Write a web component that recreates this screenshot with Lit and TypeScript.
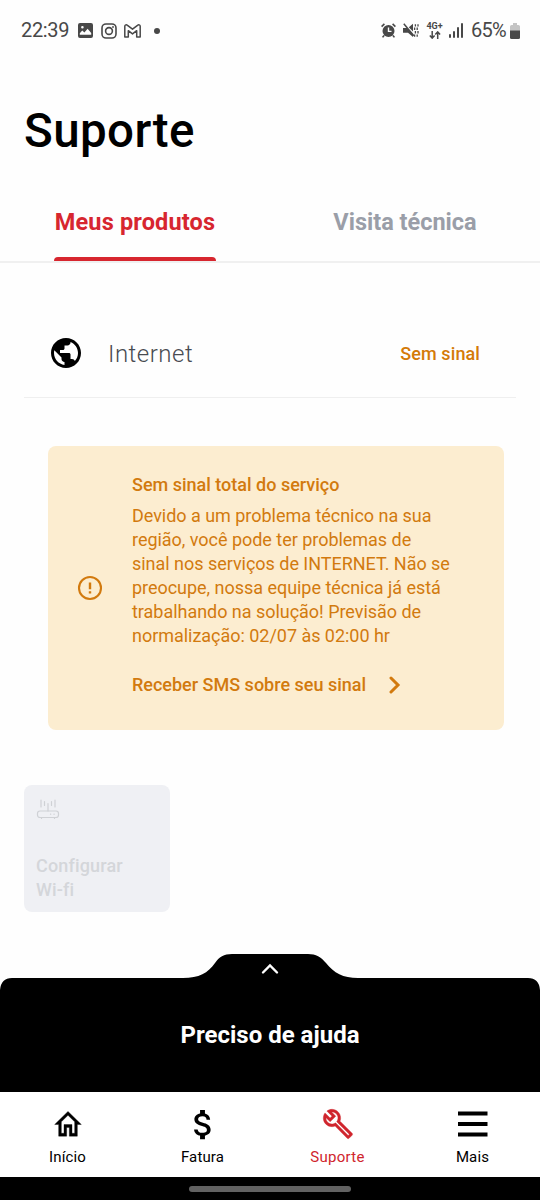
import { LitElement, html, css } from "lit";
import { customElement, property } from "lit/decorators.js";

@customElement("status-bar")
class StatusBar extends LitElement {
  static styles = css`
    :host {
      display: flex;
      justify-content: space-between;
      height: 61px;
      padding: 0 20px 0 21px;
      color: #484848;
      font: 400 20px/61px Roboto, "Liberation Sans", sans-serif;
      white-space: nowrap;
    }
    .group {
      display: flex;
      align-items: center;
    }
    svg {
      display: block;
      flex: none;
    }
    .time {
      width: 57px;
      letter-spacing: -0.35px;
    }
    .picture {
      margin-right: 8px;
    }
    .insta {
      margin-right: 7px;
    }
    .dot {
      width: 6px;
      height: 6px;
      margin-left: 13px;
      border-radius: 50%;
      background: #484848;
    }
    .alarm {
      margin-right: 7px;
    }
    .mute {
      margin-right: 7px;
    }
    .net {
      display: flex;
      flex-direction: column;
      align-items: center;
      width: 17px;
      margin-right: 6px;
      font-size: 9px;
      font-weight: 700;
      line-height: 9px;
    }
    .bars {
      margin-right: 7px;
    }
    .percent {
      width: 39px;
      letter-spacing: -0.7px;
    }
  `;

  render() {
    return html`
      <div class="group">
        <span class="time">22:39</span>
        <svg class="picture" width="15" height="15" viewBox="0 0 15 15">
          <path
            fill="#484848"
            fill-rule="evenodd"
            d="M2 0h11a2 2 0 0 1 2 2v11a2 2 0 0 1-2 2H2a2 2 0 0 1-2-2V2a2 2 0 0 1 2-2zM1.8 11.8h11.4V10L9.6 5.8 6.4 9.6 4.3 7.6 1.8 10.2zM4.4 3a1.3 1.3 0 1 0 0 2.6 1.3 1.3 0 0 0 0-2.6z"
          />
        </svg>
        <svg class="insta" width="16" height="16" viewBox="0 0 16 16" fill="none" stroke="#484848">
          <rect x="1" y="1" width="14" height="14" rx="4" stroke-width="1.6" />
          <circle cx="8" cy="8" r="3.4" stroke-width="1.6" />
          <circle cx="12" cy="4" r="0.9" fill="#484848" stroke="none" />
        </svg>
        <svg width="17" height="14" viewBox="0 0 17 14" fill="none" stroke="#484848" stroke-width="1.5" stroke-linejoin="round">
          <path d="M.8 2.2v10.9h3.5V6.7l4.2 3.2 4.2-3.2v6.4h3.5V2.2C16.2.8 14.6.4 13.5 1.3l-5 3.9-5-3.9C2.4.4.8.8.8 2.2z" />
        </svg>
        <span class="dot"></span>
      </div>
      <div class="group">
        <svg class="alarm" width="15" height="15" viewBox="0 0 15 15">
          <circle cx="7.5" cy="8" r="6" fill="#484848" />
          <path d="M7.5 4.6v3.8h3" fill="none" stroke="#fff" stroke-width="1.4" />
          <path d="M.6 3.6 3.4.9M14.4 3.6 11.6.9M3 12.5l-1.4 1.9M12 12.5l1.4 1.9" stroke="#484848" stroke-width="1.6" />
        </svg>
        <svg class="mute" width="16" height="15" viewBox="0 0 16 15">
          <path d="M0 5h3.8l6.2 6.2V14L5 9.8H0zM5.8 4.2 10 .8v7.6z" fill="#484848" />
          <path d="M.8.8 10.8 12.8" stroke="#484848" stroke-width="1.5" />
          <path d="M12.4 1.2v2.4M11.6 4.6v2.4M12.4 8v2.4M11.6 11.4v2.4M15 1.2v2.4M14.2 4.6v2.4M15 8v2.4M14.2 11.4v2.4" stroke="#484848" stroke-width="1.3" />
        </svg>
        <div class="net">
          <span>4G+</span>
          <svg width="12" height="8" viewBox="0 0 12 8" fill="none" stroke="#484848" stroke-width="1.5">
            <path d="M3.2 0v7M.8 4.5l2.4 2.6 2.4-2.6M8.7 8V1M6.3 3.5 8.7.9l2.4 2.6" />
          </svg>
        </div>
        <svg class="bars" width="15" height="15" viewBox="0 0 15 15" fill="#484848">
          <rect x="0" y="11" width="2" height="4" rx="1" />
          <rect x="4" y="8" width="2" height="7" rx="1" />
          <rect x="8" y="4" width="2" height="11" rx="1" />
          <rect x="12" y="0" width="2" height="15" rx="1" />
        </svg>
        <span class="percent">65%</span>
        <svg width="10" height="16" viewBox="0 0 10 16">
          <path d="M3 0h4v2h1.4A1.6 1.6 0 0 1 10 3.6V8H0V3.6A1.6 1.6 0 0 1 1.6 2H3z" fill="#c4c4c4" />
          <path d="M0 7.5h10v7a1.5 1.5 0 0 1-1.5 1.5h-7A1.5 1.5 0 0 1 0 14.5z" fill="#484848" />
        </svg>
      </div>
    `;
  }
}

const navIcons: Record<string, unknown> = {
  home: html`<svg width="32" height="35" viewBox="0 0 24 24" preserveAspectRatio="none">
    <path d="M12 5.69l5 4.5V18h-2v-6H9v6H7v-7.81l5-4.5M12 3L2 12h3v8h6v-6h2v6h6v-8h3L12 3z" stroke="currentColor" stroke-width="0.25" />
  </svg>`,
  money: html`<svg width="39" height="39" viewBox="0 0 24 24">
    <path d="M11.8 10.9c-2.27-.59-3-1.2-3-2.15 0-1.09 1.01-1.85 2.7-1.85 1.78 0 2.44.85 2.5 2.1h2.21c-.07-1.72-1.12-3.3-3.21-3.81V3h-3v2.16c-1.94.42-3.5 1.68-3.5 3.61 0 2.31 1.91 3.46 4.7 4.13 2.5.6 3 1.48 3 2.41 0 .69-.49 1.79-2.7 1.79-2.06 0-2.87-.92-2.98-2.1h-2.2c.12 2.19 1.76 3.42 3.68 3.83V21h3v-2.15c1.95-.37 3.5-1.5 3.5-3.55 0-2.84-2.43-3.81-4.7-4.4z" transform="translate(.5)" />
  </svg>`,
  wrench: html`<svg width="32" height="32" viewBox="0 0 24 24">
    <path d="M22.61 18.99l-9.08-9.08c.93-2.34.45-5.1-1.44-7C9.79.61 6.21.4 3.66 2.26L7.5 6.11 6.08 7.52 2.25 3.69C.39 6.23.6 9.82 2.9 12.11c1.86 1.86 4.57 2.35 6.89 1.48l9.11 9.11c.39.39 1.02.39 1.41 0l2.3-2.3c.4-.38.4-1.01 0-1.41zm-3 1.6l-9.46-9.46c-.61.45-1.29.72-2 .82-1.36.2-2.79-.21-3.83-1.25C3.37 9.76 2.93 8.5 3 7.26l3.09 3.09 4.24-4.24-3.09-3.09c1.24-.07 2.49.37 3.44 1.31 1.08 1.08 1.49 2.57 1.24 3.96-.12.71-.42 1.37-.88 1.96l9.45 9.45-.88.89z" stroke="currentColor" stroke-width="0.3" />
  </svg>`,
  menu: html`<svg width="30" height="26" viewBox="0 0 30 26">
    <path d="M0 .5h29.5v4H0zM0 11h29.5v4H0zM0 21.500h29.5v4H0z" />
  </svg>`,
};

@customElement("nav-item")
class NavItem extends LitElement {
  @property() icon = "";
  @property() label = "";

  static styles = css`
    :host {
      display: flex;
      flex-direction: column;
      align-items: center;
      fill: currentColor;
      color: #000;
    }
    :host([active]) {
      color: #d0252d;
    }
    .icon {
      display: grid;
      place-items: center;
      height: 40px;
      margin-top: 12px;
    }
    svg {
      display: block;
    }
    .label {
      margin-top: 3px;
      font: 400 15px/20px Roboto, "Liberation Sans", sans-serif;
      letter-spacing: 0.15px;
      white-space: nowrap;
    }
    :host([active]) .label {
      letter-spacing: 0.3px;
    }
  `;

  render() {
    return html`<span class="icon">${navIcons[this.icon]}</span><span class="label">${this.label}</span>`;
  }
}

@customElement("app-root")
class AppRoot extends LitElement {
  static styles = css`
    :host {
      display: flex;
      flex-direction: column;
      width: 540px;
      height: 1200px;
      overflow: hidden;
      background: #fefefe;
      font-family: Roboto, "Liberation Sans", sans-serif;
      font-variant-ligatures: none;
      white-space: nowrap;
    }
    svg {
      display: block;
      flex: none;
    }
    h1 {
      margin: 40px 0 0 24px;
      font-size: 47.5px;
      line-height: 60px;
      font-weight: 500;
      letter-spacing: 0.4px;
      color: #000;
    }
    .tabs {
      display: grid;
      grid-template-columns: 1fr 1fr;
      justify-items: center;
      height: 100px;
      border-bottom: 2px solid #f0f0f0;
    }
    .tab {
      box-sizing: border-box;
      height: 100px;
      padding-top: 46px;
      font-size: 23.5px;
      line-height: 30px;
      font-weight: 700;
      color: #9a9ea8;
    }
    .tab.on {
      display: flex;
      flex-direction: column;
      justify-content: space-between;
      letter-spacing: 0.15px;
      color: #d7262f;
    }
    .tab.on::after {
      content: "";
      height: 4.5px;
      border-radius: 4px 4px 0 0;
      background: #d7262f;
    }
    .on span {
      padding: 0 1px;
    }
    .product {
      display: flex;
      align-items: center;
      height: 88px;
      margin: 46px 24px 0;
      padding: 0 36px 0 24px;
      border-bottom: 1px solid #efefef;
    }
    .product-name {
      flex: 1;
      margin-left: 24px;
      padding-top: 1px;
      font-size: 24px;
      font-weight: 300;
      letter-spacing: 0.5px;
      color: #484b51;
    }
    .product-state {
      font-size: 18px;
      font-weight: 500;
      letter-spacing: 0.1px;
      color: #d47a08;
    }
    .alert {
      display: flex;
      align-items: center;
      box-sizing: border-box;
      height: 284px;
      margin: 48px 36px 0 48px;
      border-radius: 8px;
      padding-left: 29px;
      background: #fcedd0;
      color: #d27a0e;
      font-size: 18px;
      line-height: 24px;
    }
    .alert-text {
      margin-left: 29px;
      padding-bottom: 7px;
    }
    .alert strong {
      display: block;
      margin-bottom: 7px;
      font-weight: 500;
    }
    .line {
      display: block;
      letter-spacing: -0.03px;
    }
    .sms {
      display: flex;
      align-items: center;
      gap: 23px;
      margin-top: 25px;
      font-weight: 500;
    }
    .tile {
      display: flex;
      flex-direction: column;
      justify-content: space-between;
      box-sizing: border-box;
      width: 146px;
      height: 127px;
      margin: 55px 0 0 24px;
      padding: 13px 12px 10px;
      border-radius: 8px;
      background: #eff0f4;
      color: #d4d6da;
      font-size: 18px;
      line-height: 24px;
      font-weight: 500;
      letter-spacing: 0.15px;
    }
    .help {
      display: grid;
      grid-template: 138px / 540px;
      margin-top: auto;
    }
    .help-shape,
    .help-content {
      grid-area: 1 / 1;
    }
    .help-content {
      display: flex;
      flex-direction: column;
      align-items: center;
      padding-top: 9px;
      color: #fff;
      font-size: 24px;
      line-height: 30px;
      font-weight: 700;
    }
    .help-label {
      margin-top: 45px;
    }
    .nav {
      display: grid;
      grid-template-columns: repeat(4, 1fr);
      height: 85px;
      background: #fff;
    }
    .gesture {
      display: flex;
      justify-content: center;
      align-items: center;
      height: 23px;
      background: #000;
    }
    .pill {
      width: 162px;
      height: 6px;
      border-radius: 3px;
      background: #626262;
    }
  `;

  private lines = [
    "Devido a um problema técnico na sua",
    "região, você pode ter problemas de",
    "sinal nos serviços de INTERNET. Não se",
    "preocupe, nossa equipe técnica já está",
    "trabalhando na solução! Previsão de",
    "normalização: 02/07 às 02:00 hr",
  ];

  render() {
    return html`
      <status-bar></status-bar>
      <h1>Suporte</h1>
      <div class="tabs">
        <div class="tab on"><span>Meus produtos</span></div>
        <div class="tab"><span>Visita técnica</span></div>
      </div>
      <div class="product">
        <svg width="36" height="36" viewBox="0 0 24 24">
          <path d="M12 2C6.48 2 2 6.48 2 12s4.48 10 10 10 10-4.48 10-10S17.52 2 12 2zm-1 17.93c-3.95-.49-7-3.85-7-7.93 0-.62.08-1.21.21-1.79L9 15v1c0 1.1.9 2 2 2v1.93zm6.9-2.54c-.26-.81-1-1.39-1.9-1.39h-1v-3c0-.55-.45-1-1-1H8v-2h2c.55 0 1-.45 1-1V7h2c1.1 0 2-.9 2-2v-.41c2.93 1.19 5 4.06 5 7.41 0 2.08-.8 3.97-2.1 5.39z" />
        </svg>
        <span class="product-name">Internet</span>
        <span class="product-state">Sem sinal</span>
      </div>
      <div class="alert">
        <svg width="26" height="26" viewBox="0 0 26 26" fill="none" stroke="#d27a0e">
          <circle cx="13" cy="13" r="11" stroke-width="2.1" />
          <path d="M13 7.5v6.7M13 16.2v2.3" stroke-width="2.4" />
        </svg>
        <div class="alert-text">
          <strong>Sem sinal total do serviço</strong>
          ${this.lines.map((t) => html`<span class="line">${t}</span>`)}
          <div class="sms">
            <span>Receber SMS sobre seu sinal</span>
            <svg width="12" height="18" viewBox="0 0 12 18">
              <path d="M2 2l7 7-7 7" fill="none" stroke="#d27a0e" stroke-width="3" stroke-linecap="round" />
            </svg>
          </div>
        </div>
      </div>
      <div class="tile">
        <svg width="24" height="22" viewBox="0 0 24 22" fill="none" stroke="#cfd1d5" stroke-width="1.2" stroke-linecap="round">
          <rect x="1.5" y="13" width="21" height="6.5" rx="2.5" />
          <path d="M12 5.5V13M5 2v7M8.5 3.5v4M15.5 3.5v4M19 2v7M5.5 19.5v1M18.5 19.5v1M14.5 16.2h.2M18 16.2h.2" />
        </svg>
        <div>Configurar<br />Wi-fi</div>
      </div>
      <div class="help">
        <svg class="help-shape" width="540" height="138" viewBox="0 0 540 138">
          <path d="M0 138V36Q1 24 12 24H183C199 24 208 19 215 9C219 3 224 0 232 0H308C316 0 321 3 326 9C334 19 343 24 358 24H528Q539 24 540 36V138z" />
        </svg>
        <div class="help-content">
          <svg width="20" height="12" viewBox="0 0 20 12">
            <path d="M3 9.5l7-7 7 7" fill="none" stroke="#fff" stroke-width="2.4" stroke-linecap="round" />
          </svg>
          <span class="help-label">Preciso de ajuda</span>
        </div>
      </div>
      <div class="nav">
        <nav-item icon="home" label="Início"></nav-item>
        <nav-item icon="money" label="Fatura"></nav-item>
        <nav-item icon="wrench" label="Suporte" active></nav-item>
        <nav-item icon="menu" label="Mais"></nav-item>
      </div>
      <div class="gesture"><div class="pill"></div></div>
    `;
  }
}
